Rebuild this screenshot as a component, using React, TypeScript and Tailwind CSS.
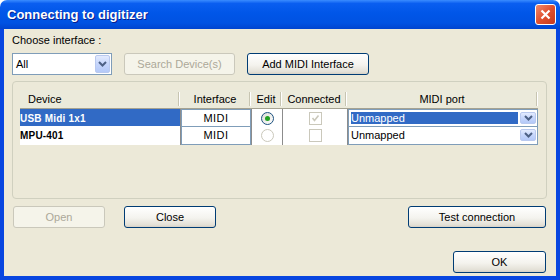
import React from 'react'

const BTN =
  'flex h-[22px] items-center justify-center rounded-[3px] border border-[#003C74] bg-[linear-gradient(#FFFFFF,#F4F3EE_55%,#E3E0D6_90%,#D6D0C5)] text-black'
const BTN_OFF =
  'flex h-[22px] items-center justify-center rounded-[3px] border border-[#CAC8BB] bg-[#F5F4EA] text-[#ACA899]'

const COLS = 'grid grid-cols-[160px_1px_70px_1px_30px_1px_64px_1px_190px]'

function DropButton({ className }: { className: string }) {
  return (
    <div
      className={
        'flex items-center justify-center rounded-[2px] border border-[#B9C9EF] bg-[linear-gradient(#E3EBFE,#C6D6FC_50%,#B4C9F8)] ' +
        className
      }
    >
      <svg width="9" height="6" viewBox="0 0 9 6">
        <path d="M1 1 L4.5 4.5 L8 1" fill="none" stroke="#4D6185" strokeWidth="2" />
      </svg>
    </div>
  )
}

function HeadCell({ label, left }: { label: string; left?: boolean }) {
  return (
    <div className="flex items-center">
      <span className={left ? 'flex-1 pl-2' : 'flex-1 text-center'}>{label}</span>
      <div className="flex h-[14px]">
        <div className="w-px bg-[#C7C5B2]" />
        <div className="w-px bg-white" />
      </div>
    </div>
  )
}

function Line() {
  return <div className="bg-[#8C8C8C]" />
}

function Radio({ on }: { on: boolean }) {
  return on ? (
    <div className="flex h-[13px] w-[13px] items-center justify-center rounded-full border border-[#1C5180] bg-[linear-gradient(135deg,#DCDCD7,#FFFFFF)]">
      <div className="h-[5px] w-[5px] rounded-full bg-[#21A121]" />
    </div>
  ) : (
    <div className="h-[13px] w-[13px] rounded-full border border-[#CAC8BB] bg-white" />
  )
}

function Check({ on }: { on: boolean }) {
  return (
    <div className="flex h-[13px] w-[13px] items-center justify-center border border-[#CAC8BB] bg-white">
      {on && (
        <svg width="9" height="9" viewBox="0 0 9 9">
          <path d="M1.5 4 L3.5 6.5 L7.5 1.5" fill="none" stroke="#CAC8BB" strokeWidth="1.6" />
        </svg>
      )}
    </div>
  )
}

const ROWS = [
  { device: 'USB Midi 1x1', selected: true },
  { device: 'MPU-401', selected: false },
]

export default function App() {
  return (
    <div className="flex h-[280px] w-[560px] flex-col font-['Liberation_Sans',Arial,sans-serif] text-[11px] text-black">
      <div className="flex h-[29px] items-center rounded-t-[7px] bg-[linear-gradient(#3A8CFF,#0A5EF0_12%,#0056E8_45%,#0052E2_80%,#0044CF)] pl-[7px] pr-[4px]">
        <span className="flex-1 text-[13px] font-bold text-white [text-shadow:1px_1px_0_#0A1E8C]">
          Connecting to digitizer
        </span>
        <div className="flex h-[21px] w-[21px] items-center justify-center rounded-[3px] border border-white bg-[linear-gradient(135deg,#F08A6E,#E0502F_50%,#C53A1C)]">
          <svg width="11" height="11" viewBox="0 0 11 11">
            <path d="M1.5 1.5 L9.5 9.5 M9.5 1.5 L1.5 9.5" stroke="white" strokeWidth="2.2" />
          </svg>
        </div>
      </div>

      <div className="flex flex-1 flex-col border-x-4 border-b-4 border-[#0846E0] bg-[#ECE9D8] pl-2 pr-[9px] pt-[5px]">
        <div className="h-[13px] leading-[13px]">Choose interface :</div>

        <div className="mt-[6px] flex items-center gap-3">
          <div className="flex h-[22px] w-[100px] items-center border border-[#7F9DB9] bg-white pl-[3px] pr-px">
            <span className="flex-1">All</span>
            <DropButton className="h-[18px] w-[15px]" />
          </div>
          <div className={BTN_OFF + ' w-[111px]'}>Search Device(s)</div>
          <div className={BTN + ' w-[122px]'}>Add MIDI Interface</div>
        </div>

        <div className="mt-[6px] h-[118px] rounded-[4px] border border-[#D0D0BF] pl-[7px] pr-[6px] pt-[8px]">
          <div className={COLS + ' h-[18px] bg-[#EBEADB]'}>
            <HeadCell label="Device" left />
            <div />
            <HeadCell label="Interface" />
            <div />
            <HeadCell label="Edit" />
            <div />
            <HeadCell label="Connected" />
            <div />
            <HeadCell label="MIDI port" />
          </div>
          <div className="h-px w-[518px] bg-[#A5A291]" />

          {ROWS.map((row) => (
            <div key={row.device} className="w-[518px]">
              <div className={COLS + ' h-[16px]'}>
                <div
                  className={
                    row.selected
                      ? 'flex items-center bg-[#316AC5] text-[10px] font-bold tracking-[0.2px] text-white'
                      : 'flex items-center bg-white text-[10px] font-bold tracking-[0.2px]'
                  }
                >
                  {row.device}
                </div>
                <Line />
                <div className="flex items-center justify-center border border-[#7F9DB9] bg-white tracking-[0.5px]">
                  MIDI
                </div>
                <Line />
                <div className="flex items-center justify-center bg-white">
                  <Radio on={row.selected} />
                </div>
                <Line />
                <div className="flex items-center justify-center bg-white">
                  <Check on={row.selected} />
                </div>
                <Line />
                <div className="flex items-center border border-[#7F9DB9] bg-white pl-[2px] pr-px">
                  <span
                    className={
                      row.selected
                        ? 'flex h-[12px] flex-1 items-center bg-[#316AC5] text-white'
                        : 'flex h-[12px] flex-1 items-center'
                    }
                  >
                    Unmapped
                  </span>
                  <DropButton className="ml-[2px] h-[12px] w-[16px]" />
                </div>
              </div>
              <div className="h-px bg-[#8C8C8C]" />
            </div>
          ))}
        </div>

        <div className="mt-[7px] flex items-center">
          <div className={BTN_OFF + ' ml-px w-[92px]'}>Open</div>
          <div className={BTN + ' ml-[19px] w-[92px]'}>Close</div>
          <div className="flex-1" />
          <div className={BTN + ' mr-px w-[138px]'}>Test connection</div>
        </div>

        <div className="mt-[23px] flex justify-end">
          <div className={BTN + ' mr-px w-[93px]'}>OK</div>
        </div>
      </div>
    </div>
  )
}
